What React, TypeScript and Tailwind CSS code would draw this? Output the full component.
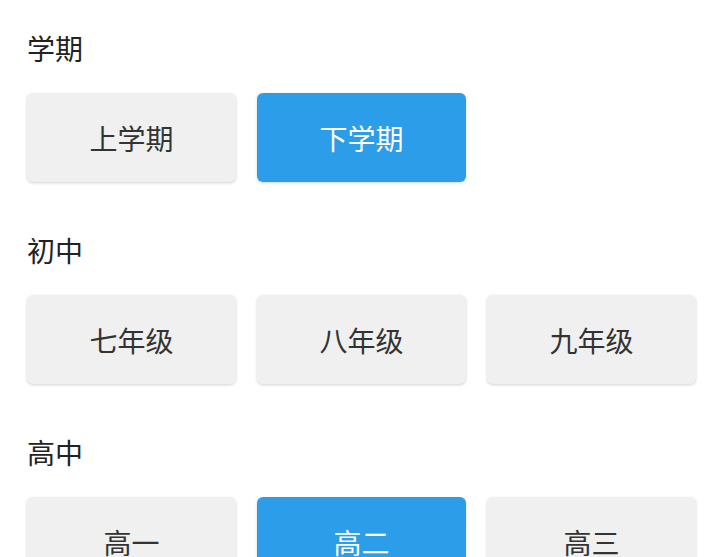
import { useState } from "react";

type Section = { title: string; options: string[] };

const sections: Section[] = [
  { title: "学期", options: ["上学期", "下学期"] },
  { title: "初中", options: ["七年级", "八年级", "九年级"] },
  { title: "高中", options: ["高一", "高二", "高三"] },
];

export default function App() {
  const [selected, setSelected] = useState<Record<string, string>>({
    学期: "下学期",
    高中: "高二",
  });

  return (
    <div
      className="min-h-screen bg-white pt-[28px] pl-[27px] pr-[24px]"
      style={{ fontFamily: '"Noto Sans CJK SC", "Noto Sans", sans-serif' }}
    >
      <div className="flex flex-col gap-[48px]">
        {sections.map((section) => (
          <div key={section.title}>
            <div className="h-10 text-[28px] leading-10 text-[#222]">{section.title}</div>
            <div className="mt-[25px] grid grid-cols-3 gap-x-[21px]">
              {section.options.map((opt) => {
                const active = selected[section.title] === opt;
                return (
                  <button
                    key={opt}
                    onClick={() => setSelected((s) => ({ ...s, [section.title]: opt }))}
                    className={
                      active
                        ? "flex h-[89px] items-center justify-center rounded-md bg-[#2b9de9] text-[28px] text-white shadow-[0_1px_3px_rgba(0,0,0,0.18)]"
                        : "flex h-[89px] items-center justify-center rounded-md bg-[#f0f0f0] text-[28px] text-[#333] shadow-[0_1px_3px_rgba(0,0,0,0.18)]"
                    }
                  >
                    {opt}
                  </button>
                );
              })}
            </div>
          </div>
        ))}
      </div>
    </div>
  );
}
